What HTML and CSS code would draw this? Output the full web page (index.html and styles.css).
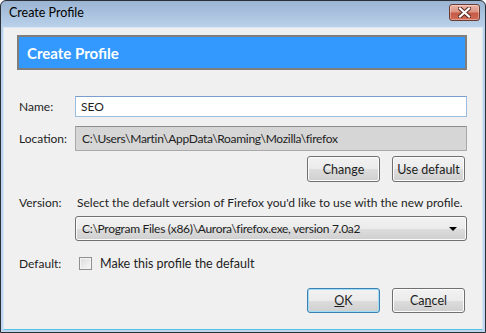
FILE: index.html
```html
<!DOCTYPE html>
<html lang="en">
<head>
    <meta charset="UTF-8">
    <title>Create Profile</title>
    <link rel="stylesheet" href="styles.css">
</head>
<body>
    <div class="window">
        <div class="titlebar">
            <span class="title">Create Profile</span>
            <div class="close-btn">
                <svg width="13" height="11" viewBox="0 0 13 11">
                    <path d="M2 1.5 L11 9.5 M11 1.5 L2 9.5" stroke="#5a2a22" stroke-width="4.2" stroke-linecap="square"/>
                    <path d="M2 1.5 L11 9.5 M11 1.5 L2 9.5" stroke="#ffffff" stroke-width="2.2" stroke-linecap="square"/>
                </svg>
            </div>
        </div>

        <div class="client">
            <div class="banner">Create Profile</div>

            <div class="row row-name">
                <span class="label">Name:</span>
                <div class="text-input">SEO</div>
            </div>

            <div class="row row-location">
                <span class="label">Location:</span>
                <div class="readonly">C:\Users\Martin\AppData\Roaming\Mozilla\firefox</div>
            </div>

            <div class="button-row row-change">
                <button class="btn">Change</button>
                <button class="btn">Use default</button>
            </div>

            <div class="row row-version">
                <span class="label">Version:</span>
                <span class="hint">Select the default version of Firefox you'd like to use with the new profile.</span>
            </div>

            <div class="row row-select">
                <span class="label"></span>
                <div class="select">
                    <span class="path">C:\Program Files (x86)\Aurora\firefox.exe, version 7.0a2</span>
                    <span class="arrow"></span>
                </div>
            </div>

            <div class="row row-default">
                <span class="label">Default:</span>
                <span class="checkbox"></span>
                <span class="check-label">Make this profile the default</span>
            </div>

            <div class="button-row row-footer">
                <button class="btn btn-default"><u>O</u>K</button>
                <button class="btn">Ca<u>n</u>cel</button>
            </div>
        </div>
    </div>
</body>
</html>
```

FILE: styles.css
```css
body {
    margin: 0;
    background: #ffffff;
    font-family: 'Lato', sans-serif;
    font-size: 12px;
    color: #1e1e1e;
}

.window {
    width: 486px;
    height: 333px;
    box-sizing: border-box;
    border: 1px solid #2b2f36;
    border-radius: 6px 6px 0 0;
    background: linear-gradient(180deg, #9bb4d3 0px, #b9d1ea 26px, #bfd6ee 100%);
    display: flex;
    flex-direction: column;
    overflow: hidden;
}

.titlebar {
    height: 26px;
    flex: none;
    display: flex;
    align-items: center;
    justify-content: space-between;
    padding: 0 5px 0 8px;
}

.title {
    color: #000;
    font-size: 12.5px;
    margin-top: -4px;
}

.close-btn {
    width: 29px;
    height: 15px;
    margin-top: -3px;
    border: 1px solid #6b3a30;
    border-radius: 3px;
    background: linear-gradient(180deg, #eab3a5 0%, #dc9584 45%, #c65a46 55%, #cf6d57 100%);
    box-shadow: inset 0 0 0 1px rgba(255, 255, 255, 0.35);
    display: flex;
    align-items: center;
    justify-content: center;
}

.client {
    flex: 1;
    margin: 0 2px 2px 2px;
    border: 1px solid #d9e7f5;
    border-bottom-color: #58c1e6;
    background: #f0f0f0;
    padding: 7px 15px 0 13px;
    display: flex;
    flex-direction: column;
}

.banner {
    height: 31px;
    border: 2px solid #7e7e7e;
    background: #3399ff;
    color: #ffffff;
    font-weight: bold;
    font-size: 15px;
    display: flex;
    align-items: center;
    padding-left: 8px;
}

.row {
    display: flex;
    align-items: center;
    padding-left: 2px;
}

.label {
    width: 56px;
    flex: none;
}

.row-name {
    margin-top: 26px;
}

.text-input {
    flex: 1;
    height: 19px;
    border: 1px solid #9cbbe0;
    border-top-color: #7a9fcb;
    background: #ffffff;
    padding-left: 5px;
    display: flex;
    align-items: center;
}

.row-location {
    margin-top: 9px;
}

.readonly {
    flex: 1;
    height: 23px;
    border: 1px solid #a9a9a9;
    border-top-color: #8d8d8d;
    background: #d6d6d6;
    padding-left: 6px;
    display: flex;
    align-items: center;
    letter-spacing: -0.3px;
}

.button-row {
    display: flex;
    justify-content: flex-end;
    gap: 12px;
    margin-right: 2px;
}

.row-change {
    margin-top: 5px;
}

.btn {
    width: 73px;
    height: 26px;
    border: 1px solid #707070;
    border-radius: 3px;
    background: linear-gradient(180deg, #f2f2f2 0%, #ebebeb 50%, #dddddd 51%, #cfcfcf 100%);
    box-shadow: inset 0 0 0 1px #fcfcfc;
    font-family: inherit;
    font-size: 12.5px;
    color: #1e1e1e;
    padding: 0;
}

.btn u {
    text-decoration-thickness: 1px;
}

.row-version {
    margin-top: 12px;
    height: 16px;
}

.hint {
    white-space: nowrap;
    margin-left: 2px;
}

.row-select {
    margin-top: 6px;
}

.select {
    flex: 1;
    height: 23px;
    border: 1px solid #707070;
    border-radius: 3px;
    background: linear-gradient(180deg, #f2f2f2 0%, #ebebeb 50%, #dddddd 51%, #cfcfcf 100%);
    box-shadow: inset 0 0 0 1px #fcfcfc;
    padding: 0 7px 0 6px;
    display: flex;
    align-items: center;
    justify-content: space-between;
}

.path {
    letter-spacing: -0.3px;
}

.arrow {
    width: 0;
    height: 0;
    border-left: 4px solid transparent;
    border-right: 4px solid transparent;
    border-top: 4px solid #000;
    margin-right: 2px;
}

.row-default {
    margin-top: 14px;
    height: 16px;
}

.checkbox {
    width: 11px;
    height: 11px;
    margin-left: 4px;
    border: 1px solid #8f8f8f;
    background: linear-gradient(135deg, #dcdcdc, #f7f7f7);
    box-shadow: inset 0 0 0 1px #f4f4f4;
}

.check-label {
    margin-left: 8px;
    font-size: 12.5px;
}

.row-footer {
    margin-top: 17px;
}

.row-footer .btn {
    height: 25px;
}

.btn-default {
    border-color: #3c7fb1;
    box-shadow: inset 0 0 0 1px #9fdcf6;
}
```
